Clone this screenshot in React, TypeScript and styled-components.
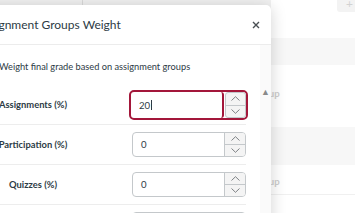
import React from 'react';
import styled, { createGlobalStyle } from 'styled-components';

const GlobalStyle = createGlobalStyle`
  html, body { margin: 0; padding: 0; background: #fff; }
  body { font-family: Lato, "Noto Sans", sans-serif; overflow: hidden; }
  * { box-sizing: border-box; }
`;

const Page = styled.div`
  position: relative;
  width: 355px;
  height: 213px;
  overflow: hidden;
  background: #fff;
`;

/* ---------- faded page behind the modal ---------- */
const Backdrop = styled.div`
  display: flex;
  flex-direction: column;
  width: 100%;
  height: 100%;
`;

const TopBar = styled.div`
  display: flex;
  height: 38px;
`;

const Tabs = styled.div`
  display: flex;
  width: 271px;
  height: 100%;
  background: #f1f1f1;
`;

const Tab = styled.div<{ $w: number }>`
  width: ${(p) => p.$w}px;
  height: 100%;
  border-right: 1px solid #dadada;
`;

const TopSpacer = styled.div`
  flex: 1;
`;

const AddButton = styled.div`
  width: 20px;
  height: 14px;
  margin-top: -2px;
  margin-right: -2px;
  border-radius: 3px;
  background: #f3f3f3;
  color: #d2d2d2;
  font-size: 12px;
  line-height: 12px;
  padding-left: 9px;
`;

const BgRow = styled.div<{ $h: number; $band?: boolean; $line?: boolean }>`
  display: flex;
  align-items: center;
  height: ${(p) => p.$h}px;
  background: ${(p) => (p.$band ? '#f7f7f7' : '#fff')};
  border-bottom: ${(p) => (p.$line ? '1px solid #f0f0f0' : 'none')};
  padding-left: 253px;
`;

const BgText = styled.span<{ $dy: number }>`
  font-size: 9.6px;
  font-weight: 700;
  color: #cdcdcd;
  transform: translateY(${(p) => p.$dy}px);
`;

/* ---------- modal ---------- */
const Modal = styled.div`
  position: absolute;
  top: 5px;
  left: -40px;
  width: 311px;
  height: 260px;
  background: #fff;
  border-radius: 5px;
  box-shadow: 0 2px 16px rgba(0, 0, 0, 0.18);
  display: flex;
  flex-direction: column;
`;

const Header = styled.div`
  display: flex;
  align-items: center;
  justify-content: space-between;
  height: 40px;
  padding: 0 11px 0 17px;
  border-bottom: 1px solid #ececec;
`;

const Title = styled.h2`
  margin: 0;
  font-size: 12px;
  font-weight: 400;
  color: #2d3b45;
  letter-spacing: 0;
`;

const CloseButton = styled.button`
  border: none;
  background: none;
  padding: 0;
  width: 8px;
  height: 8px;
  display: flex;
  align-items: center;
  justify-content: center;
  margin-top: 1px;
`;

const Body = styled.div`
  display: flex;
  flex: 1;
`;

const Content = styled.div`
  flex: 1;
  padding: 14px 14px 0 16px;
`;

const Gutter = styled.div`
  width: 11px;
  background: #fafafa;
  padding-top: 42px;
  color: #8a8a8a;
  font-size: 9px;
  line-height: 9px;
  padding-left: 1px;
`;

const CheckRow = styled.label`
  display: flex;
  align-items: center;
  gap: 7px;
  height: 14px;
  margin-bottom: 12px;
  font-size: 9.25px;
  color: #2d3b45;
`;

const Check = styled.span`
  width: 16px;
  height: 14px;
  border: 1px solid #c7cdd1;
  border-radius: 2px;
`;

const Table = styled.div`
  display: flex;
  flex-direction: column;
`;

const Row = styled.div`
  display: grid;
  grid-template-columns: 114px 1fr;
  align-items: center;
  height: 40px;
  border-bottom: 1px solid #ededed;
`;

const Label = styled.span`
  text-align: center;
  font-size: 9.4px;
  font-weight: 700;
  color: #2d3b45;
`;

const InputCell = styled.div`
  display: flex;
  justify-content: flex-end;
`;

const NumberBox = styled.div<{ $focused?: boolean }>`
  display: flex;
  width: ${(p) => (p.$focused ? 119 : 114)}px;
  height: ${(p) => (p.$focused ? 30 : 25)}px;
  margin-right: ${(p) => (p.$focused ? -2 : 0)}px;
  margin-top: ${(p) => (p.$focused ? 1 : 0)}px;
  border: ${(p) => (p.$focused ? '2px solid #a3173a' : '1px solid #c4c8cb')};
  border-radius: ${(p) => (p.$focused ? 5 : 4)}px;
  background: #fff;
  overflow: hidden;
`;

const Field = styled.div<{ $focused?: boolean }>`
  flex: 1;
  display: flex;
  align-items: center;
  padding-left: 8px;
  font-size: 9.6px;
  color: #2d3b45;
  border-right: ${(p) => (p.$focused ? '2px solid #a3173a' : 'none')};
  border-radius: ${(p) => (p.$focused ? '0 3px 3px 0' : '0')};
`;

const Caret = styled.span`
  display: inline-block;
  width: 1px;
  height: 10px;
  background: #2d3b45;
  margin-left: 0.5px;
`;

const Spinner = styled.div<{ $focused?: boolean }>`
  width: 21px;
  display: flex;
  flex-direction: column;
  background: #f4f4f4;
  border: 1px solid #c4c8cb;
  border-width: ${(p) => (p.$focused ? '1px' : '0 0 0 1px')};
  border-radius: ${(p) => (p.$focused ? '3px' : '0')};
  margin: ${(p) => (p.$focused ? '0 0 0 1px' : '0')};
`;

const SpinButton = styled.div<{ $top?: boolean }>`
  flex: 1;
  display: flex;
  align-items: center;
  justify-content: center;
  border-bottom: ${(p) => (p.$top ? '1px solid #c4c8cb' : 'none')};
`;

const Chevron = ({ up }: { up?: boolean }) => (
  <svg width="9" height="5" viewBox="0 0 9 5">
    <path
      d={up ? 'M0.5 4.5 L4.5 0.7 L8.5 4.5' : 'M0.5 0.5 L4.5 4.3 L8.5 0.5'}
      fill="none"
      stroke="#6f7478"
      strokeWidth="0.9"
    />
  </svg>
);

const NumberInput = ({ value, focused }: { value: string; focused?: boolean }) => (
  <NumberBox $focused={focused}>
    <Field $focused={focused}>
      {value}
      {focused && <Caret />}
    </Field>
    <Spinner $focused={focused}>
      <SpinButton $top>
        <Chevron up />
      </SpinButton>
      <SpinButton>
        <Chevron />
      </SpinButton>
    </Spinner>
  </NumberBox>
);

const rows = [
  { label: 'Assignments (%)', value: '20', focused: true },
  { label: 'Participation (%)', value: '0' },
  { label: 'Quizzes (%)', value: '0' },
  { label: 'Exams (%)', value: '0' },
];

export default function App() {
  return (
    <>
      <GlobalStyle />
      <Page>
        <Backdrop>
          <TopBar>
            <Tabs>
              <Tab $w={83} />
            </Tabs>
            <TopSpacer />
            <AddButton>+</AddButton>
          </TopBar>
          <BgRow $h={27} $band />
          <BgRow $h={62}>
            <BgText $dy={-3}>Group</BgText>
          </BgRow>
          <BgRow $h={38} $band />
          <BgRow $h={30} $line>
            <BgText $dy={2}>Group</BgText>
          </BgRow>
        </Backdrop>
        <Modal>
          <Header>
            <Title>Assignment Groups Weight</Title>
            <CloseButton aria-label="Close">
              <svg width="8" height="8" viewBox="0 0 8 8">
                <path d="M1 1 L7 7 M7 1 L1 7" stroke="#4a4f53" strokeWidth="1.4" />
              </svg>
            </CloseButton>
          </Header>
          <Body>
            <Content>
              <CheckRow>
                <Check />
                Weight final grade based on assignment groups
              </CheckRow>
              <Table>
                {rows.map((r) => (
                  <Row key={r.label}>
                    <Label>{r.label}</Label>
                    <InputCell>
                      <NumberInput value={r.value} focused={r.focused} />
                    </InputCell>
                  </Row>
                ))}
              </Table>
            </Content>
            <Gutter>▲</Gutter>
          </Body>
        </Modal>
      </Page>
    </>
  );
}
